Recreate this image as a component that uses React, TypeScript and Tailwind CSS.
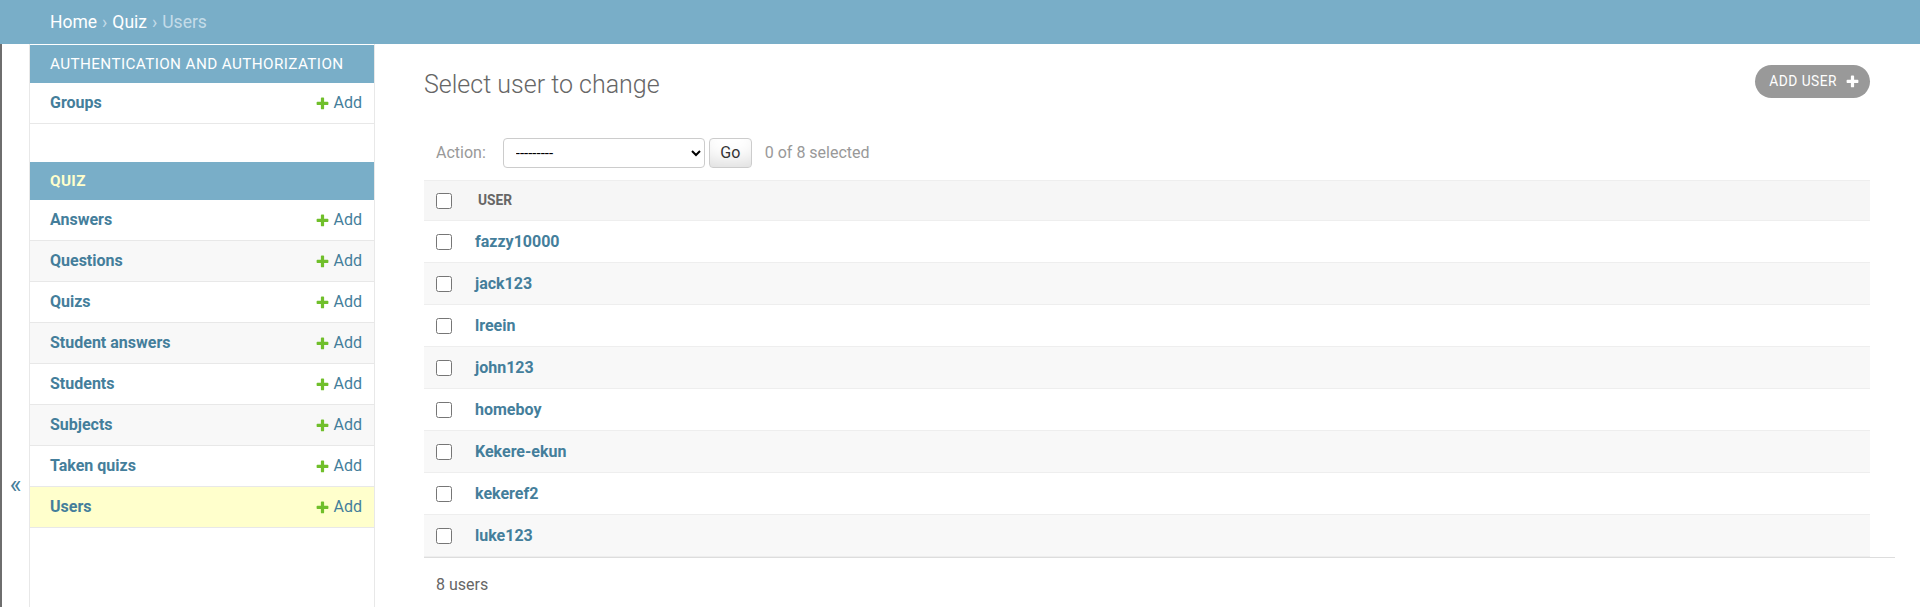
import React from 'react'

const plusPath =
  'M1600 796v192q0 40-28 68t-68 28h-416v416q0 40-28 68t-68 28h-192q-40 0-68-28t-28-68v-416h-416q-40 0-68-28t-28-68v-192q0-40 28-68t68-28h416v-416q0-40 28-68t68-28h192q40 0 68 28t28 68v416h416q40 0 68 28t28 68z'

function PlusIcon({ className, color }: { className: string; color: string }) {
  return (
    <svg viewBox="0 0 1792 1792" className={className}>
      <path fill={color} d={plusPath} />
    </svg>
  )
}

function AddLink() {
  return (
    <span className="flex items-center gap-[4px] text-[#447e9b] font-normal">
      <PlusIcon className="w-[15px] h-[15px]" color="#70bf2b" />
      Add
    </span>
  )
}

const quizModels = [
  'Answers',
  'Questions',
  'Quizs',
  'Student answers',
  'Students',
  'Subjects',
  'Taken quizs',
  'Users',
]

const users = ['fazzy10000', 'jack123', 'lreein', 'john123', 'homeboy', 'Kekere-ekun', 'kekeref2', 'luke123']

function SidebarRow({ label, index, current }: { label: string; index: number; current?: boolean }) {
  const bg = current ? 'bg-[#ffffcc]' : index % 2 === 1 ? 'bg-[#f8f8f8]' : 'bg-white'
  return (
    <div className={`h-[41px] flex items-center justify-between pl-[20px] pr-[12px] border-b border-[#e8e8e8] ${bg}`}>
      <span className="font-bold text-[#447e9b]">{label}</span>
      <AddLink />
    </div>
  )
}

export default function App() {
  return (
    <div className="min-h-[607px] bg-white font-['Roboto','Liberation_Sans',sans-serif] text-[16px] text-[#333]">
      {/* Header / breadcrumbs */}
      <div className="h-[44px] bg-[#79aec8] flex items-center pl-[50px] text-[17.5px] text-[#c4dce8]">
        <span className="text-white">Home</span>
        <span className="mx-[5px]">›</span>
        <span className="text-white">Quiz</span>
        <span className="mx-[5px]">›</span>
        <span>Users</span>
      </div>

      <div className="flex min-h-[563px]">
        {/* Sidebar toggle */}
        <div className="w-[29px] shrink-0 border-l-2 border-[#6e6e6e] flex justify-center">
          <span className="mt-[426px] text-[25px] leading-[30px] text-[#447e9b]">«</span>
        </div>

        {/* Nav sidebar */}
        <div className="w-[346px] shrink-0 border-x border-[#e8e8e8] pt-[1px]">
          <div className="h-[38px] bg-[#79aec8] flex items-center pl-[20px] text-white text-[15.25px] tracking-[0.4px]">
            AUTHENTICATION AND AUTHORIZATION
          </div>
          <SidebarRow label="Groups" index={0} />

          <div className="h-[38px]" />

          <div className="h-[38px] bg-[#79aec8] flex items-center pl-[20px] text-[#ffffcc] font-bold text-[15.25px] tracking-[0.4px]">
            QUIZ
          </div>
          {quizModels.map((m, i) => (
            <SidebarRow key={m} label={m} index={i} current={m === 'Users'} />
          ))}
        </div>

        {/* Content */}
        <div className="flex-1 pl-[49px] pr-[25px] pt-[25px]">
          <div className="flex items-start justify-between mr-[25px]">
            <h1 className="mt-[2px] text-[25px] leading-[28px] font-light text-[#666]">Select user to change</h1>
            <span className="-mt-[4px] h-[33px] pl-[14px] pr-[10px] rounded-full bg-[#999] flex items-center gap-[8px] text-white text-[13.75px] tracking-[0.5px]">
              ADD USER
              <PlusIcon className="w-[15px] h-[15px]" color="#ffffff" />
            </span>
          </div>

          {/* Actions */}
          <div className="mt-[39px] h-[30px] flex items-center pl-[12px] text-[#999]">
            <span>Action:</span>
            <select className="ml-[17px] h-[30px] w-[202px] border border-[#ccc] rounded-[4px] bg-white text-black text-[15px] pl-[8px]">
              <option>---------</option>
            </select>
            <button className="ml-[4px] h-[30px] w-[43px] border border-[#ccc] rounded-[4px] bg-white text-[#333] shadow-[inset_0_-15px_20px_-10px_rgba(0,0,0,0.15)]">
              Go
            </button>
            <span className="ml-[13px]">0 of 8 selected</span>
          </div>

          {/* Results table */}
          <div className="mt-[12px] mr-[25px]">
            <div className="h-[41px] flex items-center bg-[#f6f6f6] border-y border-[#eee]">
              <div className="w-[54px] pl-[12px] flex items-center">
                <input type="checkbox" className="w-[16px] h-[16px] m-0" />
              </div>
              <span className="text-[13.75px] font-bold text-[#666]">USER</span>
            </div>
            {users.map((u, i) => (
              <div
                key={u}
                className={`h-[42px] flex items-center border-b border-[#eee] ${i % 2 === 1 ? 'bg-[#f8f8f8]' : 'bg-white'}`}
              >
                <div className="w-[51px] pl-[12px] flex items-center">
                  <input type="checkbox" className="w-[16px] h-[16px] m-0" />
                </div>
                <span className="font-bold text-[#447e9b]">{u}</span>
              </div>
            ))}
          </div>

          {/* Paginator */}
          <div className="border-t border-[#ddd] pt-[13px] pl-[12px] leading-[27px] text-[#666]">8 users</div>
        </div>
      </div>
    </div>
  )
}
